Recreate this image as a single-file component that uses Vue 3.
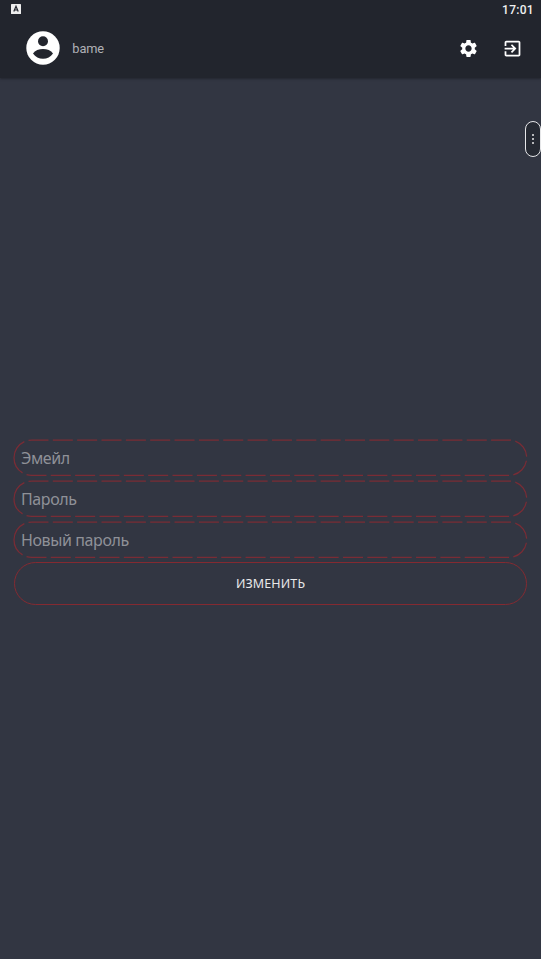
<script setup>
const fields = ['Эмейл', 'Пароль', 'Новый пароль']
const outline = 'M1 18.7A17.7 17.7 0 0 1 18.7 1H496A17.7 17.7 0 0 1 496 36.4H18.7A17.7 17.7 0 0 1 1 18.7'
</script>

<template>
  <div class="screen">
    <header class="top">
      <div class="status">
        <svg class="badge" viewBox="0 0 10 10">
          <rect width="10" height="10" rx=".6" fill="#eee" />
          <path d="M2.8 7.5 5 2.3 7.2 7.5M3.6 6h2.8" fill="none" stroke="#22252d" stroke-width="1.2" />
        </svg>
        <span class="clock">17:01</span>
      </div>
      <div class="bar">
        <svg class="avatar" viewBox="0 0 34 34">
          <circle cx="17" cy="17" r="16.7" fill="#fff" />
          <circle cx="17" cy="10.3" r="5" fill="#22252d" />
          <path d="M7 22.4C9 19.2 13 17.9 17 17.9S25 19.2 27 22.4C24.7 26 21 27.8 17 27.8S9.3 26 7 22.4Z" fill="#22252d" />
        </svg>
        <span class="name">bame</span>
        <svg class="icon gear" viewBox="0 0 24 24" fill="#fff">
          <path d="M19.14 12.94c.04-.3.06-.61.06-.94 0-.32-.02-.64-.07-.94l2.03-1.58c.18-.14.23-.41.12-.61l-1.92-3.32c-.12-.22-.37-.29-.59-.22l-2.39.96c-.5-.38-1.03-.7-1.62-.94l-.36-2.54c-.04-.24-.24-.41-.48-.41h-3.84c-.24 0-.43.17-.47.41l-.36 2.54c-.59.24-1.13.57-1.62.94l-2.39-.96c-.22-.08-.47 0-.59.22L2.74 8.87c-.12.21-.08.47.12.61l2.03 1.58c-.05.3-.09.63-.09.94s.02.64.07.94l-2.03 1.58c-.18.14-.23.41-.12.61l1.92 3.32c.12.22.37.29.59.22l2.39-.96c.5.38 1.03.7 1.62.94l.36 2.54c.05.24.24.41.48.41h3.84c.24 0 .44-.17.47-.41l.36-2.54c.59-.24 1.13-.56 1.62-.94l2.39.96c.22.08.47 0 .59-.22l1.92-3.32c.12-.22.07-.47-.12-.61l-2.01-1.58zM12 15.6c-1.98 0-3.6-1.62-3.6-3.6s1.62-3.6 3.6-3.6 3.6 1.62 3.6 3.6-1.62 3.6-3.6 3.6z" />
        </svg>
        <svg class="icon exit" viewBox="0 0 24 24" fill="#fff">
          <path d="M10.09 15.59 11.5 17l5-5-5-5-1.41 1.41L12.67 11H3v2h9.67l-2.58 2.59zM19 3H5c-1.11 0-2 .9-2 2v4h2V5h14v14H5v-4H3v4c0 1.1.89 2 2 2h14c1.1 0 2-.9 2-2V5c0-1.1-.9-2-2-2z" />
        </svg>
      </div>
    </header>

    <main class="form">
      <label v-for="f in fields" :key="f" class="field">
        <svg class="dash" viewBox="0 0 515 38"><path :d="outline" /></svg>
        <span class="hint">{{ f }}</span>
      </label>
      <button class="submit">ИЗМЕНИТЬ</button>
    </main>

    <div class="handle"><i /><i /><i /></div>
  </div>
</template>

<style>
body { margin: 0; background: #323642; }
</style>

<style scoped>
.screen {
  position: relative;
  height: 959px;
  overflow: hidden;
  background: #323642;
  font-family: "Noto Sans", sans-serif;
  display: flex;
  flex-direction: column;
}
.top { height: 78px; background: #22252d; box-shadow: 0 1px 2px rgba(25, 27, 34, .6); flex: none; }
.status { height: 19px; display: flex; justify-content: space-between; align-items: center; padding: 0 7px 0 11px; }
.badge { width: 10px; height: 10px; margin-top: -1px; }
.clock { padding-top: 1px; font: 500 12px/19px Roboto, sans-serif; color: #f0f0f0; letter-spacing: .3px; }
.bar { height: 58px; display: flex; align-items: center; padding: 0 18.5px 0 26.3px; }
.avatar { width: 34px; height: 34px; }
.name { margin-left: 12px; flex: 1; padding-top: 2px; font: 12.8px/18px Roboto, sans-serif; letter-spacing: -.1px; color: #b0b1b6; }
.icon { width: 21px; height: 21px; }
.exit { margin-left: 22.5px; }
.form { margin: 361px 13px 0; display: flex; flex-direction: column; flex: none; }
.field { position: relative; height: 38px; margin-bottom: 2.8px; display: flex; align-items: center; }
.dash { position: absolute; inset: 0; width: 515px; height: 38px; }
.dash path { fill: none; stroke: #7a2c35; stroke-width: 1.25; stroke-dasharray: 20.05 4.3; }
.hint { padding-left: 8px; font-size: 16px; line-height: 22px; letter-spacing: -.4px; color: #8f9198; }
.submit {
  height: 43px;
  margin: .6px 1px 0;
  padding: 1px 0 0;
  border: 1px solid #842a31;
  border-radius: 21.5px;
  background: transparent;
  color: #e8e8ea;
  font: 12.5px/20px "Noto Sans", sans-serif;
  letter-spacing: .12px;
}
.handle {
  position: absolute;
  left: 525px;
  top: 121px;
  width: 14px;
  height: 34px;
  border: 1px solid #e6e7e9;
  border-radius: 8px;
  background: #262a33;
  display: flex;
  flex-direction: column;
  align-items: center;
  justify-content: center;
  gap: 1.4px;
}
.handle i { width: 2.6px; height: 2.6px; border-radius: 50%; background: #e8e8ea; }
</style>
